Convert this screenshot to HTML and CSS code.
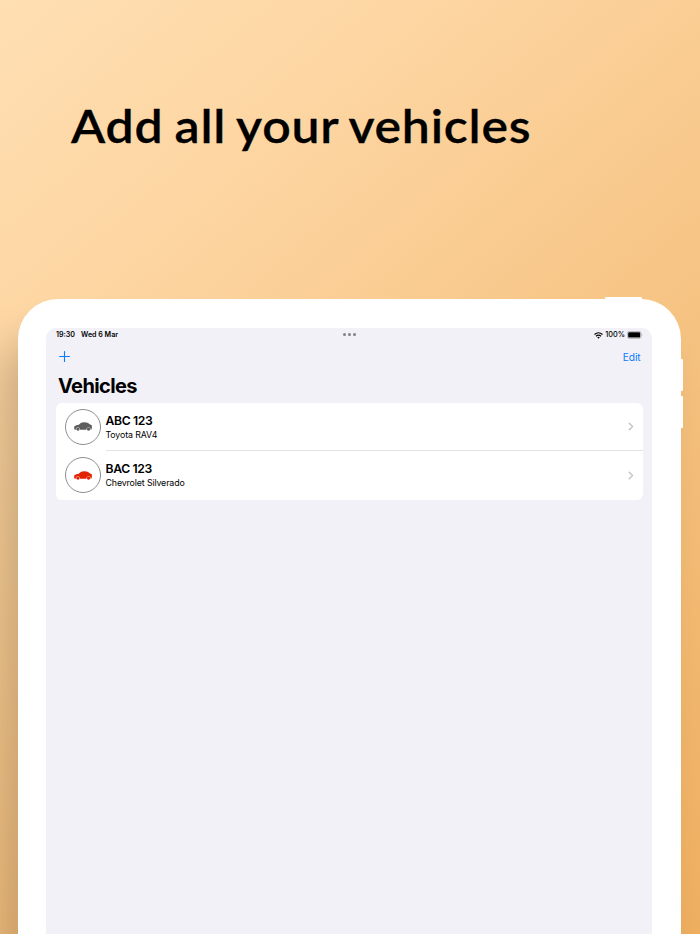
FILE: index.html
```html
<!DOCTYPE html>
<html lang="en">
<head>
<meta charset="utf-8">
<title>Vehicles</title>
<link rel="stylesheet" href="styles.css">
</head>
<body>
<svg class="defs" width="0" height="0" aria-hidden="true">
  <symbol id="car" viewBox="0 0 18 9">
    <path fill="currentColor" d="M.4 4.200C1.600 3.400 3 3 4.800 2.700C6.300 1 7.700.2 10 .2C12.700.1 14.300.9 16 2.400L17.600 3C18 4.200 18 5.500 17.700 7.200L16.700 7.700C16.900 4.300 12.200 4.300 12.400 7.700H6.100C6.300 4.300 1.600 4.300 1.800 7.700L.4 7.400C0 6.400 0 5.300.4 4.200Z"/>
    <circle cx="3.950" cy="7.100" r="1.700" fill="currentColor"/>
    <circle cx="14.550" cy="7.100" r="1.700" fill="currentColor"/>
  </symbol>
  <symbol id="chevron" viewBox="0 0 6 9">
    <path d="M1.200 1.200L4.600 4.500L1.200 7.800" fill="none" stroke="#bdbdc1" stroke-width="1.200" stroke-linecap="round" stroke-linejoin="round"/>
  </symbol>
</svg>
<main class="poster">
  <h1 class="headline"><span>Add all your vehicles</span></h1>
  <section class="tablet">
    <i class="button power"></i>
    <i class="button volume-up"></i>
    <i class="button volume-down"></i>
    <div class="screen">
      <div class="status">
        <span class="time">19:30</span>
        <span class="date">Wed 6 Mar</span>
        <span class="dots"><i></i><i></i><i></i></span>
        <span class="signal">
          <svg width="9" height="7" viewBox="0 0 9 7" fill="none" stroke="#000" stroke-width="1.200">
            <path d="M.5 2.500Q4.500-1 8.500 2.500M2 4.200Q4.500 2 7 4.200"/>
            <path d="M3.200 5.300Q4.500 4.300 5.800 5.300L4.500 6.700Z" fill="#000" stroke="none"/>
          </svg>
          <span class="percent">100%</span>
          <svg width="16" height="8" viewBox="0 0 16 8">
            <rect x=".4" y=".4" width="13.600" height="7" rx="2" fill="#fff" stroke="#99999c" stroke-width=".7"/>
            <rect x="1.200" y="1.200" width="12" height="5.400" rx="1.200"/>
            <path d="M14.800 2.700Q15.800 3.900 14.800 5.100Z" fill="#888"/>
          </svg>
        </span>
      </div>
      <nav class="toolbar">
        <svg width="11" height="11" viewBox="0 0 11 11" stroke="#0a7aff" stroke-width="1.100" stroke-linecap="round"><path d="M5.500.6V10.400M.6 5.500H10.400"/></svg>
        <span class="edit">Edit</span>
      </nav>
      <h2 class="title">Vehicles</h2>
      <ul class="list">
        <li class="row">
          <span class="avatar grey"><svg width="18" height="9"><use href="#car"/></svg></span>
          <div class="info"><strong>ABC 123</strong><span>Toyota RAV4</span></div>
          <svg class="chevron" width="6" height="9"><use href="#chevron"/></svg>
        </li>
        <li class="row">
          <span class="avatar red"><svg width="18" height="9"><use href="#car"/></svg></span>
          <div class="info"><strong>BAC 123</strong><span>Chevrolet Silverado</span></div>
          <svg class="chevron" width="6" height="9"><use href="#chevron"/></svg>
        </li>
      </ul>
    </div>
  </section>
</main>
</body>
</html>
```
FILE: styles.css
```css
* { box-sizing: border-box; margin: 0; padding: 0; }
body { width: 700px; height: 934px; overflow: hidden; font-family: Inter, "Liberation Sans", sans-serif; color: #000; }
.defs { position: absolute; }
.poster {
  height: 934px;
  overflow: hidden;
  padding: 97px 19px 0 18px;
  background: linear-gradient(140deg, #ffdfb3 0%, #fdd5a1 25%, #f5c17f 62%, #efaf60 100%);
}
.headline {
  height: 202px;
  padding-left: 53px;
  font: 600 46px/57px Lato, sans-serif;
  letter-spacing: .75px;
  word-spacing: -2px;
  white-space: nowrap;
}
.headline span {
  display: inline-block;
  transform: scaleX(1.085);
  transform-origin: 0 0;
  -webkit-text-stroke: .3px #000;
}
.tablet {
  position: relative;
  height: 860px;
  padding: 29px 29px 0 28px;
  border-radius: 40px;
  background: #fff;
  box-shadow: -20px 40px 40px rgba(0, 0, 0, .18);
}
.button { position: absolute; background: #fff; }
.power { top: -2px; right: 39px; width: 37px; height: 3px; border-radius: 1px 1px 0 0; }
.volume-up, .volume-down { right: -1.500px; width: 3px; height: 32px; border-radius: 0 1px 1px 0; }
.volume-up { top: 60px; }
.volume-down { top: 97px; }
.screen { height: 831px; padding: 0 9px 0 10px; border-radius: 10px; background: #f2f1f7; }
.status {
  position: relative;
  display: flex;
  align-items: center;
  height: 14px;
  font-size: 7.100px;
  font-weight: 600;
}
.time, .date, .percent { line-height: 8px; }
.date { margin-left: 6px; }
.dots { position: absolute; left: 287px; top: 5px; display: flex; gap: 2px; }
.dots i { width: 3px; height: 3px; border-radius: 50%; background: #828286; }
.signal { display: flex; align-items: center; gap: 2px; margin-left: auto; }
.percent { font-size: 7.300px; font-weight: 500; }
.toolbar { display: flex; align-items: center; justify-content: space-between; height: 29px; padding: 0 2.500px 0 3px; }
.edit { color: #0a7aff; font-size: 10.200px; letter-spacing: -.1px; }
.title { height: 31.500px; padding-left: 2px; font-size: 20px; line-height: 30px; font-weight: 700; letter-spacing: -.62px; }
.list { list-style: none; border-radius: 6px; background: #fff; overflow: hidden; }
.row { position: relative; display: flex; align-items: center; height: 48.500px; padding: 0 9px; }
.row + .row::before { content: ""; position: absolute; top: -1.500px; left: 50px; right: 0; height: 1px; background: #e2e2e4; }
.avatar { display: flex; align-items: center; justify-content: center; width: 36px; height: 36px; border: 1px solid #8d8d8d; border-radius: 50%; }
.grey { color: #5e5e5e; }
.red { color: #e32400; }
.info { display: flex; flex-direction: column; margin-left: 4.500px; }
.info strong { font-size: 12.200px; line-height: 15px; font-weight: 600; letter-spacing: -.35px; }
.info span { font-size: 8.800px; line-height: 13px; letter-spacing: -.12px; }
.chevron { margin-left: auto; }
```
